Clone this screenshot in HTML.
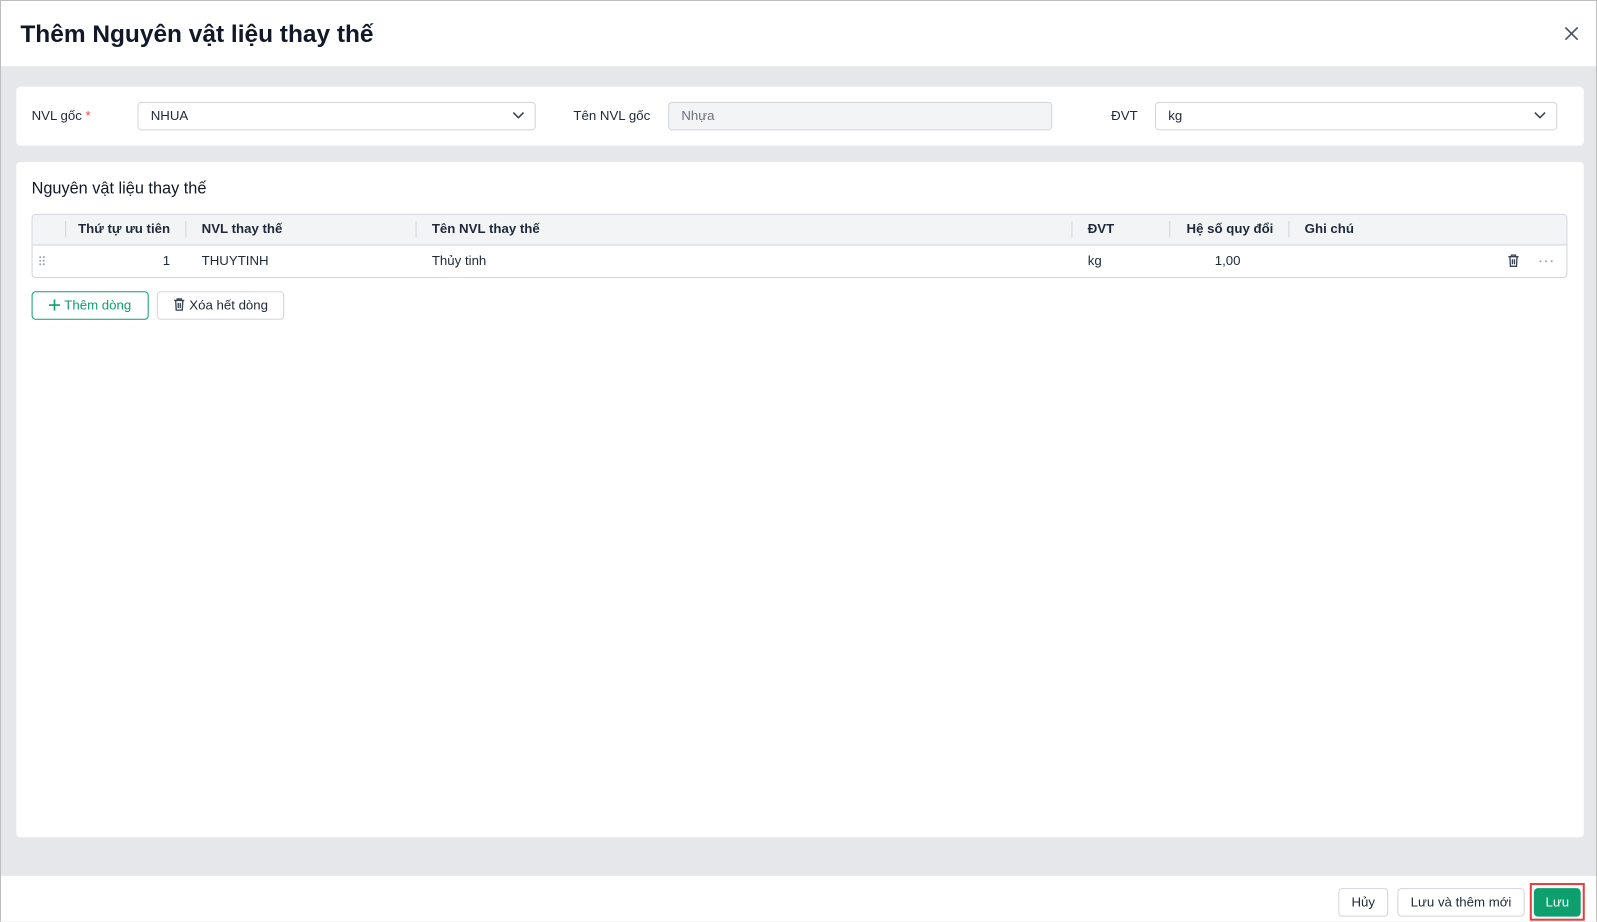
<!DOCTYPE html>
<html><head><meta charset="utf-8"><style>
*{box-sizing:border-box;margin:0;padding:0}
html,body{width:1597px;height:922px;overflow:hidden;background:#fff}
body{font-family:"Liberation Sans",sans-serif;color:#1f2937;font-size:13px}
#w{position:absolute;left:0;top:0;width:1568px;height:905px;transform:scale(1.01849);transform-origin:0 0;border:1px solid #bdbdbd;background:#e5e7eb}
.a{position:absolute}
.hdr{left:0;top:0;width:1566px;height:64px;background:#fff}
.ttl{left:19px;top:19px;font-size:24px;font-weight:bold;color:#111827}
.card{background:#fff;border-radius:4px}
.lbl{font-size:13px;color:#1f2937}
.inp{border:1px solid #d1d5db;border-radius:4px;height:28px;background:#fff;padding-left:12px;line-height:26px;font-size:13px}
.th{top:209px;height:30px;line-height:30px;font-weight:bold;font-size:13px;color:#1f2937}
.td{top:239px;height:32px;line-height:32px;font-size:13px}
.sep{top:216px;width:1px;height:16px;background:#d1d5db}
.btn{border:1px solid #d1d5db;border-radius:4px;background:#fff;height:28px;line-height:26px;text-align:center;font-size:13px}
</style></head><body><div id="w">
<div class="a hdr"></div>
<div class="a ttl">Thêm Nguyên vật liệu thay thế</div>
<svg class="a" style="left:1535px;top:25px" width="14" height="14" viewBox="0 0 14 14"><path d="M1 1L13 13M13 1L1 13" stroke="#4b5563" stroke-width="1.6"/></svg>

<div class="a card" style="left:15px;top:84px;width:1539px;height:58px"></div>
<div class="a lbl" style="left:30px;top:105px">NVL gốc <span style="color:#ef4444">*</span></div>
<div class="a inp" style="left:134px;top:99px;width:391px">NHUA</div>
<svg class="a" style="left:502px;top:108px" width="12" height="8" viewBox="0 0 12 8"><path d="M1 1.5L6 6.5L11 1.5" stroke="#374151" stroke-width="1.5" fill="none"/></svg>
<div class="a lbl" style="left:562px;top:105px">Tên NVL gốc</div>
<div class="a inp" style="left:655px;top:99px;width:377px;background:#f3f4f6;color:#6b7280">Nhựa</div>
<div class="a lbl" style="left:1090px;top:105px">ĐVT</div>
<div class="a inp" style="left:1133px;top:99px;width:395px">kg</div>
<svg class="a" style="left:1505px;top:108px" width="12" height="8" viewBox="0 0 12 8"><path d="M1 1.5L6 6.5L11 1.5" stroke="#374151" stroke-width="1.5" fill="none"/></svg>

<div class="a card" style="left:15px;top:158px;width:1539px;height:663px"></div>
<div class="a" style="left:30px;top:176px;font-size:16px;color:#111827">Nguyên vật liệu thay thế</div>
<div class="a" style="left:30px;top:209px;width:1508px;height:63px;border:1px solid #d1d5db;border-radius:4px;overflow:hidden">
 <div style="height:30px;background:#f3f4f6;border-bottom:1px solid #d1d5db"></div>
</div>
<div class="a sep" style="left:63px"></div><div class="a sep" style="left:181px"></div><div class="a sep" style="left:407px"></div><div class="a sep" style="left:1051px"></div><div class="a sep" style="left:1147px"></div><div class="a sep" style="left:1264px"></div>
<div class="a th" style="left:64px;width:102px;text-align:right">Thứ tự ưu tiên</div>
<div class="a th" style="left:197px">NVL thay thế</div>
<div class="a th" style="left:423px">Tên NVL thay thế</div>
<div class="a th" style="left:1067px">ĐVT</div>
<div class="a th" style="left:1164px">Hệ số quy đổi</div>
<div class="a th" style="left:1280px">Ghi chú</div>
<svg class="a" style="left:37px;top:250px" width="7" height="10"><g fill="#9ca3af"><circle cx="1.5" cy="1.5" r="1"/><circle cx="5" cy="1.5" r="1"/><circle cx="1.5" cy="5" r="1"/><circle cx="5" cy="5" r="1"/><circle cx="1.5" cy="8.5" r="1"/><circle cx="5" cy="8.5" r="1"/></g></svg>
<div class="a td" style="left:64px;width:102px;text-align:right">1</div>
<div class="a td" style="left:197px">THUYTINH</div>
<div class="a td" style="left:423px">Thủy tinh</div>
<div class="a td" style="left:1067px">kg</div>
<div class="a td" style="left:1150px;width:67px;text-align:right">1,00</div>
<svg class="a" style="left:1479px;top:248px" width="12" height="14" viewBox="0 0 12 14"><path d="M1 3H11M4 3V1.5H8V3M2.5 3L3 12.5H9L9.5 3M5 5.5V10.5M7 5.5V10.5" stroke="#374151" stroke-width="1.3" fill="none"/></svg>
<svg class="a" style="left:1510px;top:254px" width="14" height="3"><g fill="#9ca3af"><circle cx="1.5" cy="1.5" r="1"/><circle cx="7" cy="1.5" r="1"/><circle cx="12.5" cy="1.5" r="1"/></g></svg>

<div class="a btn" style="left:30px;top:285px;width:115px;border-color:#0e9f6e;color:#0e9f6e">
<svg style="vertical-align:-1px;margin-right:4px" width="11" height="11"><path d="M5.5 0V11M0 5.5H11" stroke="#0e9f6e" stroke-width="1.6"/></svg>Thêm dòng</div>
<div class="a btn" style="left:153px;top:285px;width:125px">
<svg style="vertical-align:-2px;margin-right:4px" width="12" height="14" viewBox="0 0 12 14"><path d="M1 3H11M4 3V1.5H8V3M2.5 3L3 12.5H9L9.5 3M5 5.5V10.5M7 5.5V10.5" stroke="#374151" stroke-width="1.3" fill="none"/></svg>Xóa hết dòng</div>

<div class="a" style="left:0;top:858px;width:1566px;height:46px;background:#fff;border-top:1px solid #e5e7eb"></div>
<div class="a btn" style="left:1313px;top:871px;width:49px">Hủy</div>
<div class="a btn" style="left:1371px;top:871px;width:125px">Lưu và thêm mới</div>
<div class="a" style="left:1501px;top:866px;width:54px;height:37px;border:2px solid #e53e3e"></div>
<div class="a btn" style="left:1505px;top:871px;width:46px;background:#0e9f6e;border-color:#0e9f6e;color:#fff">Lưu</div>
</div></body></html>
